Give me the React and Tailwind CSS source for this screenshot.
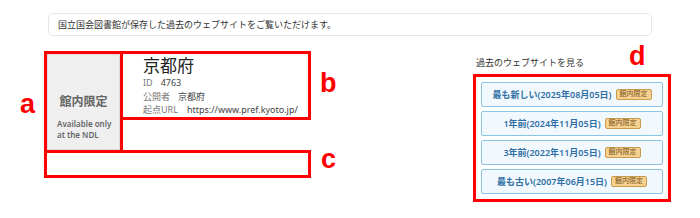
import React from 'react';

const versions = [
  '最も新しい(2025年08月05日)',
  '1年前(2024年11月05日)',
  '3年前(2022年11月05日)',
  '最も古い(2007年06月15日)',
];

// red annotation letters lie over the page
function Mark({ children, className }) {
  return (
    <span className={`absolute font-['Liberation_Sans',Arial,sans-serif] font-bold text-[27px] leading-[26px] text-[#ff0000] ${className}`}>
      {children}
    </span>
  );
}

export default function App() {
  return (
    <div className="relative w-[700px] h-[218px] bg-white text-[#333] font-['Noto_Sans','Noto_Sans_CJK_JP',sans-serif]">
      {/* notice banner */}
      <div className="mx-[48px] pt-[13px]">
        <div className="h-[23px] flex items-center pl-[9px] border border-[#e6e6e6] rounded-[5px] text-[9px]">
          国立国会図書館が保存した過去のウェブサイトをご覧いただけます。
        </div>
      </div>

      <div className="flex mt-[15px]">
        {/* site info */}
        <div className="ml-[44px] w-[267px]">
          <div className="flex items-start">
            <div className="w-[79px] h-[99px] border-[3px] border-b-0 border-[#ff0000]">
              <div className="h-full bg-[#efefef] border border-[#dcdcdc] flex flex-col items-center pt-[39px]">
                <div className="text-[12px] leading-[16px] font-bold text-[#666]">館内限定</div>
                <div className="mt-[8px] self-start pl-[9px] text-[8px] leading-[11px] font-semibold text-[#666]">
                  Available only<br />at the NDL
                </div>
              </div>
            </div>
            <div className="w-[188px] h-[69px] border-[3px] border-l-0 border-[#ff0000] pl-[20px] pt-[2px]">
              <div className="text-[17px] leading-[20px] text-[#222]">京都府</div>
              <div className="text-[9px] leading-[13.5px]">
                <div><span className="text-[#777] mr-[8px]">ID</span><span className="text-[#444]">4763</span></div>
                <div><span className="text-[#777] mr-[8px]">公開者</span><span className="text-[#444]">京都府</span></div>
                <div><span className="text-[#777] mr-[9px]">起点URL</span><span className="text-[#444]">https://www.pref.kyoto.jp/</span></div>
              </div>
            </div>
          </div>
          <div className="h-[28px] border-[3px] border-[#ff0000]"></div>
        </div>

        {/* archived versions */}
        <div className="ml-[162px] w-[198px]">
          <div className="h-[23px] flex items-center pl-[3px] text-[9px] text-[#333]">過去のウェブサイトを見る</div>
          <div className="border-[3px] border-[#ff0000] p-[5px] flex flex-col gap-[4px]">
            {versions.map((v) => (
              <div
                key={v}
                className="h-[25px] flex items-center justify-center gap-[4px] bg-[#f2f9fe] border border-[#8cc4e4] rounded-[2px]"
              >
                <span className="text-[9px] font-semibold text-[#2f6fa6]">{v}</span>
                <span className="h-[11px] px-[3px] flex items-center bg-[#f6d190] border border-[#c79b4b] rounded-[2px] text-[7px] text-[#7a5520]">
                  館内限定
                </span>
              </div>
            ))}
          </div>
        </div>
      </div>

      <Mark className="left-[20px] top-[91px]">a</Mark>
      <Mark className="left-[320px] top-[70px]">b</Mark>
      <Mark className="left-[321px] top-[146px]">c</Mark>
      <Mark className="left-[629px] top-[43px]">d</Mark>
    </div>
  );
}
